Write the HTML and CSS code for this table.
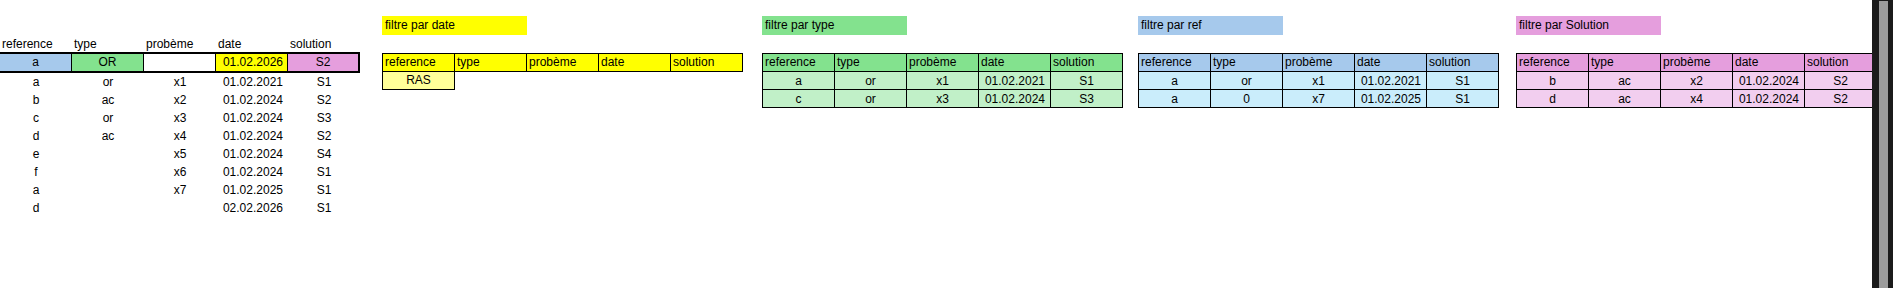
FILE: index.html
```html
<!DOCTYPE html>
<html lang="fr">
<head>
<meta charset="utf-8">
<title>Filtres</title>
<link rel="stylesheet" href="styles.css">
</head>
<body>
<div class="screen">
  <div class="sheet">
    <section class="data-block">
      <div class="grid head">
        <span>reference</span><span>type</span><span>probème</span><span>date</span><span>solution</span>
      </div>
      <div class="crit">
        <span class="bg-blue">a</span><span class="bg-green">OR</span><span class="bg-white"></span><span class="bg-yellow num">01.02.2026</span><span class="bg-pink">S2</span>
      </div>
      <div class="grid data"><span>a</span><span>or</span><span>x1</span><span class="num">01.02.2021</span><span>S1</span></div>
      <div class="grid data"><span>b</span><span>ac</span><span>x2</span><span class="num">01.02.2024</span><span>S2</span></div>
      <div class="grid data"><span>c</span><span>or</span><span>x3</span><span class="num">01.02.2024</span><span>S3</span></div>
      <div class="grid data"><span>d</span><span>ac</span><span>x4</span><span class="num">01.02.2024</span><span>S2</span></div>
      <div class="grid data"><span>e</span><span></span><span>x5</span><span class="num">01.02.2024</span><span>S4</span></div>
      <div class="grid data"><span>f</span><span></span><span>x6</span><span class="num">01.02.2024</span><span>S1</span></div>
      <div class="grid data"><span>a</span><span></span><span>x7</span><span class="num">01.02.2025</span><span>S1</span></div>
      <div class="grid data"><span>d</span><span></span><span></span><span class="num">02.02.2026</span><span>S1</span></div>
    </section>

    <section class="filter f-date theme-yellow">
      <div class="ftitle">filtre par date</div>
      <div class="frow fhead">
        <span>reference</span><span>type</span><span>probème</span><span>date</span><span>solution</span>
      </div>
      <div class="ras">RAS</div>
    </section>

    <section class="filter f-type theme-green">
      <div class="ftitle">filtre par type</div>
      <div class="frow fhead">
        <span>reference</span><span>type</span><span>probème</span><span>date</span><span>solution</span>
      </div>
      <div class="frow fbody"><span>a</span><span>or</span><span>x1</span><span class="num">01.02.2021</span><span>S1</span></div>
      <div class="frow fbody"><span>c</span><span>or</span><span>x3</span><span class="num">01.02.2024</span><span>S3</span></div>
    </section>

    <section class="filter f-ref theme-blue">
      <div class="ftitle">filtre par ref</div>
      <div class="frow fhead">
        <span>reference</span><span>type</span><span>probème</span><span>date</span><span>solution</span>
      </div>
      <div class="frow fbody"><span>a</span><span>or</span><span>x1</span><span class="num">01.02.2021</span><span>S1</span></div>
      <div class="frow fbody"><span>a</span><span>0</span><span>x7</span><span class="num">01.02.2025</span><span>S1</span></div>
    </section>

    <section class="filter f-sol theme-pink">
      <div class="ftitle">filtre par Solution</div>
      <div class="frow fhead">
        <span>reference</span><span>type</span><span>probème</span><span>date</span><span>solution</span>
      </div>
      <div class="frow fbody"><span>b</span><span>ac</span><span>x2</span><span class="num">01.02.2024</span><span>S2</span></div>
      <div class="frow fbody"><span>d</span><span>ac</span><span>x4</span><span class="num">01.02.2024</span><span>S2</span></div>
    </section>
  </div>
  <div class="scrollbar"><div class="thumb"></div></div>
</div>
</body>
</html>
```

FILE: styles.css
```css
html, body {
  margin: 0;
  padding: 0;
  background: #ffffff;
}

body {
  font-family: "Liberation Sans", Arial, sans-serif;
  font-size: 12px;
  color: #000000;
}

.screen {
  display: flex;
  width: 1893px;
  height: 288px;
  overflow: hidden;
}

.sheet {
  flex: 1;
  min-width: 0;
  display: flex;
  align-items: flex-start;
  overflow: hidden;
}

/* ---------- main data block ---------- */
.data-block {
  flex: none;
  margin-top: 36px;
}

.grid {
  display: grid;
  grid-template-columns: repeat(5, 72px);
}

.grid span {
  white-space: nowrap;
  overflow: hidden;
}

.head span {
  height: 16px;
  line-height: 16px;
  padding-left: 2px;
}

.data span {
  height: 18px;
  line-height: 18px;
  text-align: center;
}

.data span.num {
  text-align: right;
  padding-right: 5px;
}

.crit {
  display: grid;
  grid-template-columns: 71px 71px 71px 71px 70px;
  gap: 1px;
  background: #000000;
  padding: 2px;
  margin-left: -2px;
  width: max-content;
}

.crit span {
  height: 17px;
  line-height: 17px;
  text-align: center;
  white-space: nowrap;
}

.crit span.num {
  text-align: right;
  padding-right: 4px;
}

.bg-blue { background: #a6c9ec; }
.bg-green { background: #83e28e; }
.bg-white { background: #ffffff; }
.bg-yellow { background: #ffff00; }
.bg-pink { background: #e59edd; }

/* ---------- filter blocks ---------- */
.filter {
  flex: none;
  margin-top: 16px;
}

.f-date { margin-left: 22px; }
.f-type { margin-left: 19px; }
.f-ref { margin-left: 15px; }
.f-sol { margin-left: 17px; }

.ftitle {
  width: 145px;
  height: 19px;
  line-height: 19px;
  padding-left: 3px;
  box-sizing: border-box;
  margin-bottom: 18px;
  white-space: nowrap;
}

.frow {
  display: grid;
  grid-template-columns: repeat(5, 71px);
  column-gap: 1px;
  background: #000000;
  padding: 0 1px 1px;
  width: max-content;
}

.frow span {
  white-space: nowrap;
  overflow: hidden;
}

.fhead {
  padding-top: 1px;
}

.fhead span {
  height: 17px;
  line-height: 17px;
  padding-left: 2px;
}

.fbody span {
  height: 17px;
  line-height: 16px;
  padding-top: 1px;
  box-sizing: border-box;
  text-align: center;
}

.fbody span.num {
  text-align: right;
  padding-right: 5px;
}

.ras {
  width: 73px;
  height: 18px;
  box-sizing: border-box;
  border: 1px solid #000000;
  border-top: 0;
  background: #ffff99;
  text-align: center;
  line-height: 17px;
}

.theme-yellow .ftitle,
.theme-yellow .fhead span { background: #ffff00; }

.theme-green .ftitle,
.theme-green .fhead span { background: #83e28e; }
.theme-green .fbody span { background: #c1f0c8; }

.theme-blue .ftitle,
.theme-blue .fhead span { background: #a6c9ec; }
.theme-blue .fbody span { background: #caedfb; }

.theme-pink .ftitle,
.theme-pink .fhead span { background: #e59edd; }
.theme-pink .fbody span { background: #f2ceef; }

/* ---------- scrollbar ---------- */
.scrollbar {
  flex: none;
  width: 21px;
  background: #1b1b1b;
  padding: 1px 0 0 7px;
  box-sizing: border-box;
}

.thumb {
  width: 9px;
  height: 100%;
  background: #9c9c9c;
}
```
